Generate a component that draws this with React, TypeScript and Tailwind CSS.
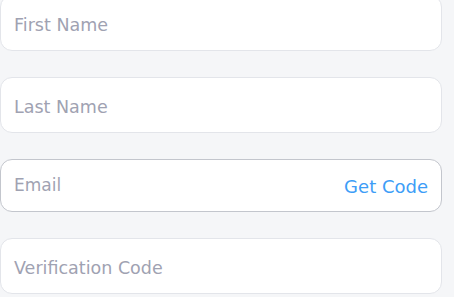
const fields = [
  { label: "First Name", h: "h-[56px]", border: "border-[#e3e5ea]" },
  { label: "Last Name", h: "h-[56px]", border: "border-[#e3e5ea]" },
];

export default function App() {
  return (
    <div className="min-h-screen w-full bg-[#f5f6f8] font-['DejaVu_Sans',sans-serif]">
      <div className="flex w-[442px] flex-col gap-[26px] -translate-y-[5px]">
        {fields.map((f) => (
          <div
            key={f.label}
            className={`flex ${f.h} items-center rounded-[12px] border ${f.border} bg-white px-[13px] pt-[5px]`}
          >
            <span className="text-[17.5px] text-[#9fa2b2]">{f.label}</span>
          </div>
        ))}
        <div className="flex h-[53px] items-center justify-between rounded-[12px] border border-[#c3c6cd] bg-white pl-[13px] pr-[13px] pt-[1px]">
          <span className="text-[17px] text-[#9fa2b2]">Email</span>
          <button className="text-[18px] text-[#3d9df7]">Get Code</button>
        </div>
        <div className="flex h-[56px] items-center rounded-[12px] border border-[#e3e5ea] bg-white px-[13px] pt-[4px]">
          <span className="text-[17.5px] text-[#9fa2b2]">Verification Code</span>
        </div>
      </div>
    </div>
  );
}
